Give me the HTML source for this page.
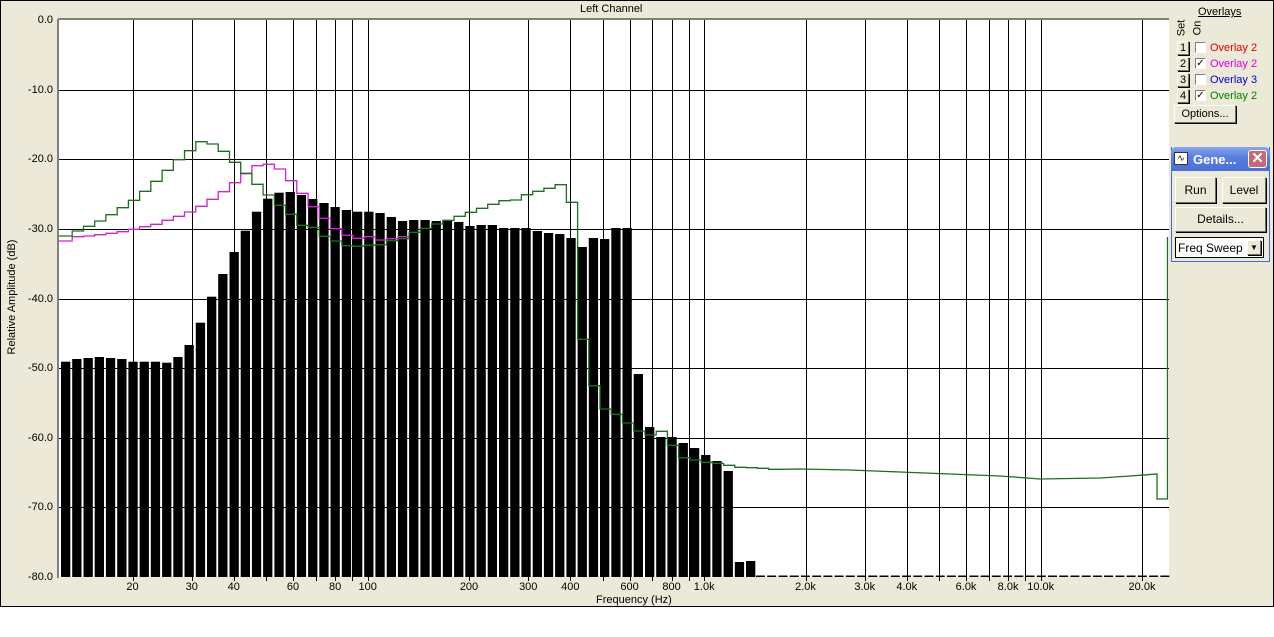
<!DOCTYPE html>
<html><head><meta charset="utf-8">
<style>
html,body{margin:0;padding:0;background:#fff;width:1274px;height:637px;overflow:hidden;font-family:"Liberation Sans",Tahoma,sans-serif;}
#win{position:absolute;left:0;top:0;width:1272px;height:605px;background:#ece9d8;border:1px solid #000;}
.t{position:absolute;font-size:11px;color:#000;white-space:nowrap;}
.btn{position:absolute;background:#ece9d8;border:1px solid;border-color:#fff #716f64 #716f64 #fff;box-shadow:1px 1px 0 #000;font-size:11px;text-align:center;box-sizing:border-box;}
.cb{position:absolute;width:11px;height:11px;background:#fff;border:1px solid;border-color:#808080 #fff #fff #808080;box-sizing:border-box;font-size:10px;line-height:9px;text-align:center;}
</style></head><body>
<div id="win"></div>
<svg id="plot" width="1274" height="637" style="position:absolute;left:0;top:0" xmlns="http://www.w3.org/2000/svg"></svg>
<div class="t" style="left:580px;top:3px;">Left Channel</div>
<div class="t" style="left:-58px;top:291px;transform:rotate(-90deg);width:140px;text-align:center;">Relative Amplitude (dB)</div>
<div class="t" style="left:596px;top:594px;">Frequency (Hz)</div>
<div id="labels"></div>
<div class="t" style="left:1198px;top:6px;text-decoration:underline;">Overlays</div>
<div class="t" style="left:1173px;top:22px;transform:rotate(-90deg);">Set</div>
<div class="t" style="left:1190px;top:22px;transform:rotate(-90deg);">On</div>
<div class="btn" style="left:1177px;top:41px;width:12px;height:14px;line-height:12px;">1</div>
<div class="cb" style="left:1195px;top:42px;"></div>
<div class="t" style="left:1210px;top:42px;color:#e00000;">Overlay 2</div>
<div class="btn" style="left:1177px;top:57px;width:12px;height:14px;line-height:12px;">2</div>
<div class="cb" style="left:1195px;top:58px;">✓</div>
<div class="t" style="left:1210px;top:58px;color:#e000e0;">Overlay 2</div>
<div class="btn" style="left:1177px;top:73px;width:12px;height:14px;line-height:12px;">3</div>
<div class="cb" style="left:1195px;top:74px;"></div>
<div class="t" style="left:1210px;top:74px;color:#0000c0;">Overlay 3</div>
<div class="btn" style="left:1177px;top:89px;width:12px;height:14px;line-height:12px;">4</div>
<div class="cb" style="left:1195px;top:90px;">✓</div>
<div class="t" style="left:1210px;top:90px;color:#008000;">Overlay 2</div>
<div class="btn" style="left:1174px;top:105px;width:62px;height:18px;line-height:16px;">Options...</div>
<div style="position:absolute;left:1171px;top:147px;width:99px;height:115px;background:#ece9d8;border:1px solid #3f6ad8;border-top:none;box-sizing:border-box;"></div>
<div style="position:absolute;left:1171px;top:147px;width:99px;height:24px;background:linear-gradient(#8aa6ee,#5a7fe0 40%,#4a6fd8);border-radius:5px 5px 0 0;"></div>
<div style="position:absolute;left:1174px;top:152px;width:14px;height:13px;background:#fff;border:1px solid #333;box-sizing:border-box;font-size:9px;line-height:10px;text-align:center;color:#000;">∿</div>
<div class="t" style="left:1193px;top:152px;color:#fff;font-weight:bold;font-size:13px;">Gene...</div>
<div style="position:absolute;left:1248px;top:150px;width:19px;height:18px;background:#c7687a;border:1px solid #fff;border-radius:3px;box-sizing:border-box;color:#fff;font-size:15px;line-height:15px;text-align:center;font-weight:bold;">✕</div>
<div class="btn" style="left:1175px;top:177px;width:41px;height:26px;line-height:24px;font-size:12px;">Run</div>
<div class="btn" style="left:1222px;top:177px;width:44px;height:26px;line-height:24px;font-size:12px;">Level</div>
<div class="btn" style="left:1175px;top:207px;width:91px;height:25px;line-height:23px;font-size:12px;">Details...</div>
<div style="position:absolute;left:1175px;top:237px;width:89px;height:21px;background:#fff;border:1px solid #000;box-sizing:border-box;"></div>
<div class="t" style="left:1178px;top:241px;font-size:12px;">Freq Sweep</div>
<div class="btn" style="left:1247px;top:240px;width:14px;height:15px;font-size:8px;line-height:14px;">▼</div>
<script>
var S=document.getElementById('plot'),h='';
function fx(f){return 132.5+336.5*Math.log10(f/20);}
function fy(d){return 20-(d)*557/80;}
h+='<rect x="59" y="20" width="1110" height="557" fill="#fff"/>';
var fr=[];[10,100,1000,10000].forEach(function(b){for(var k=1;k<10;k++){var f=b*k;if(f>=20&&f<=20000)fr.push(f);}});
fr.forEach(function(f){var x=Math.round(fx(f))+.5;h+='<line x1="'+x+'" y1="20" x2="'+x+'" y2="577" stroke="#000"/>';h+='<line x1="'+x+'" y1="577" x2="'+x+'" y2="581" stroke="#000"/>';});
for(var k=1;k<8;k++){var y=Math.round(fy(-10*k))+.5;h+='<line x1="59" y1="'+y+'" x2="1169" y2="'+y+'" stroke="#000"/>';}
var bars=[361.7,359,358,357,358,359,361.7,361.7,361.7,362.7,357,345,322.7,296.7,274,252,230.7,211.7,198.7,192.7,192,195,199,203,207,210,211.7,211.7,213,217,221,220,220,221,220,222,226,225,225,228,228,228,231,233,234,238,247,238,239,228,228,374,427,437,437,443,448,455,461,471,562,561];
var W=11.23;
bars.forEach(function(t,i){h+='<rect x="'+(61+i*W).toFixed(1)+'" y="'+t+'" width="9.3" height="'+(577-t)+'" fill="#000"/>';});
for(var x=756;x<1166;x+=11.23){h+='<rect x="'+x.toFixed(1)+'" y="575.5" width="9" height="1.5" fill="#000"/>';}
var g=[236,231,226.3,221,214.7,207.7,200.3,191.3,181.3,170.3,159.7,150.7,141.7,144,151.3,162.3,173.3,184.3,195,205.3,214.3,225.3,227.3,236.3,241,245.7,246.3,245.3,244.7,240.7,238.7,232.3,228.3,224,220.3,216.3,212.3,208.3,204.3,200.7,200,194.7,191.3,188.3,184.7,202.3,339.3,385.7,409,414.3,423,431,435,431.3,445.3,457.7,460,462.3,463.3,465.3,467.3,467.7,468.3,469.3];
var m=[241,236.7,236,234.7,233.3,231.7,229.3,226.7,224.3,220.3,216.3,212,206.3,199.3,191.7,182.7,173.7,165.7,164.3,169,180.7,193.3,206.7,218.3,228.7,235.3,238.3,236.7,240,238.7,236.7];
function steps(a){var p=[];a.forEach(function(v,i){var xa=i==0?59:61+i*W,xb=61+(i+1)*W;p.push(xa.toFixed(1)+','+v,xb.toFixed(1)+','+v);});return p;}
var mp=steps(m);
h+='<polyline points="'+mp.join(' ')+'" fill="none" stroke="#d020d0" stroke-width="1.3"/>';
var gp=steps(g);
gp.push('800,469','850,470','900,472','950,474','1000,476','1040,479','1100,478','1130,476','1157,474','1157,499','1167.5,499','1167.5,237');
h+='<polyline points="'+gp.join(' ')+'" fill="none" stroke="#1e6e1e" stroke-width="1.3"/>';
h+='<line x1="58" y1="19" x2="58" y2="578" stroke="#808080" stroke-width="2"/>';
h+='<line x1="58" y1="19" x2="1169" y2="19" stroke="#808080" stroke-width="2"/>';
S.innerHTML=h;
var L='';
for(var k=0;k<=8;k++){var y=fy(-10*k);L+='<div class="t" style="right:1221px;top:'+(y-6)+'px;">'+(k==0?'0.0':'-'+(10*k)+'.0')+'</div>';}
[[20,'20'],[30,'30'],[40,'40'],[60,'60'],[80,'80'],[100,'100'],[200,'200'],[300,'300'],[400,'400'],[600,'600'],[800,'800'],[1000,'1.0k'],[2000,'2.0k'],[3000,'3.0k'],[4000,'4.0k'],[6000,'6.0k'],[8000,'8.0k'],[10000,'10.0k'],[20000,'20.0k']].forEach(function(a){L+='<div class="t" style="left:'+(fx(a[0])-30)+'px;width:60px;text-align:center;top:581px;">'+a[1]+'</div>';});
document.getElementById('labels').innerHTML=L;
</script>
</body></html>
